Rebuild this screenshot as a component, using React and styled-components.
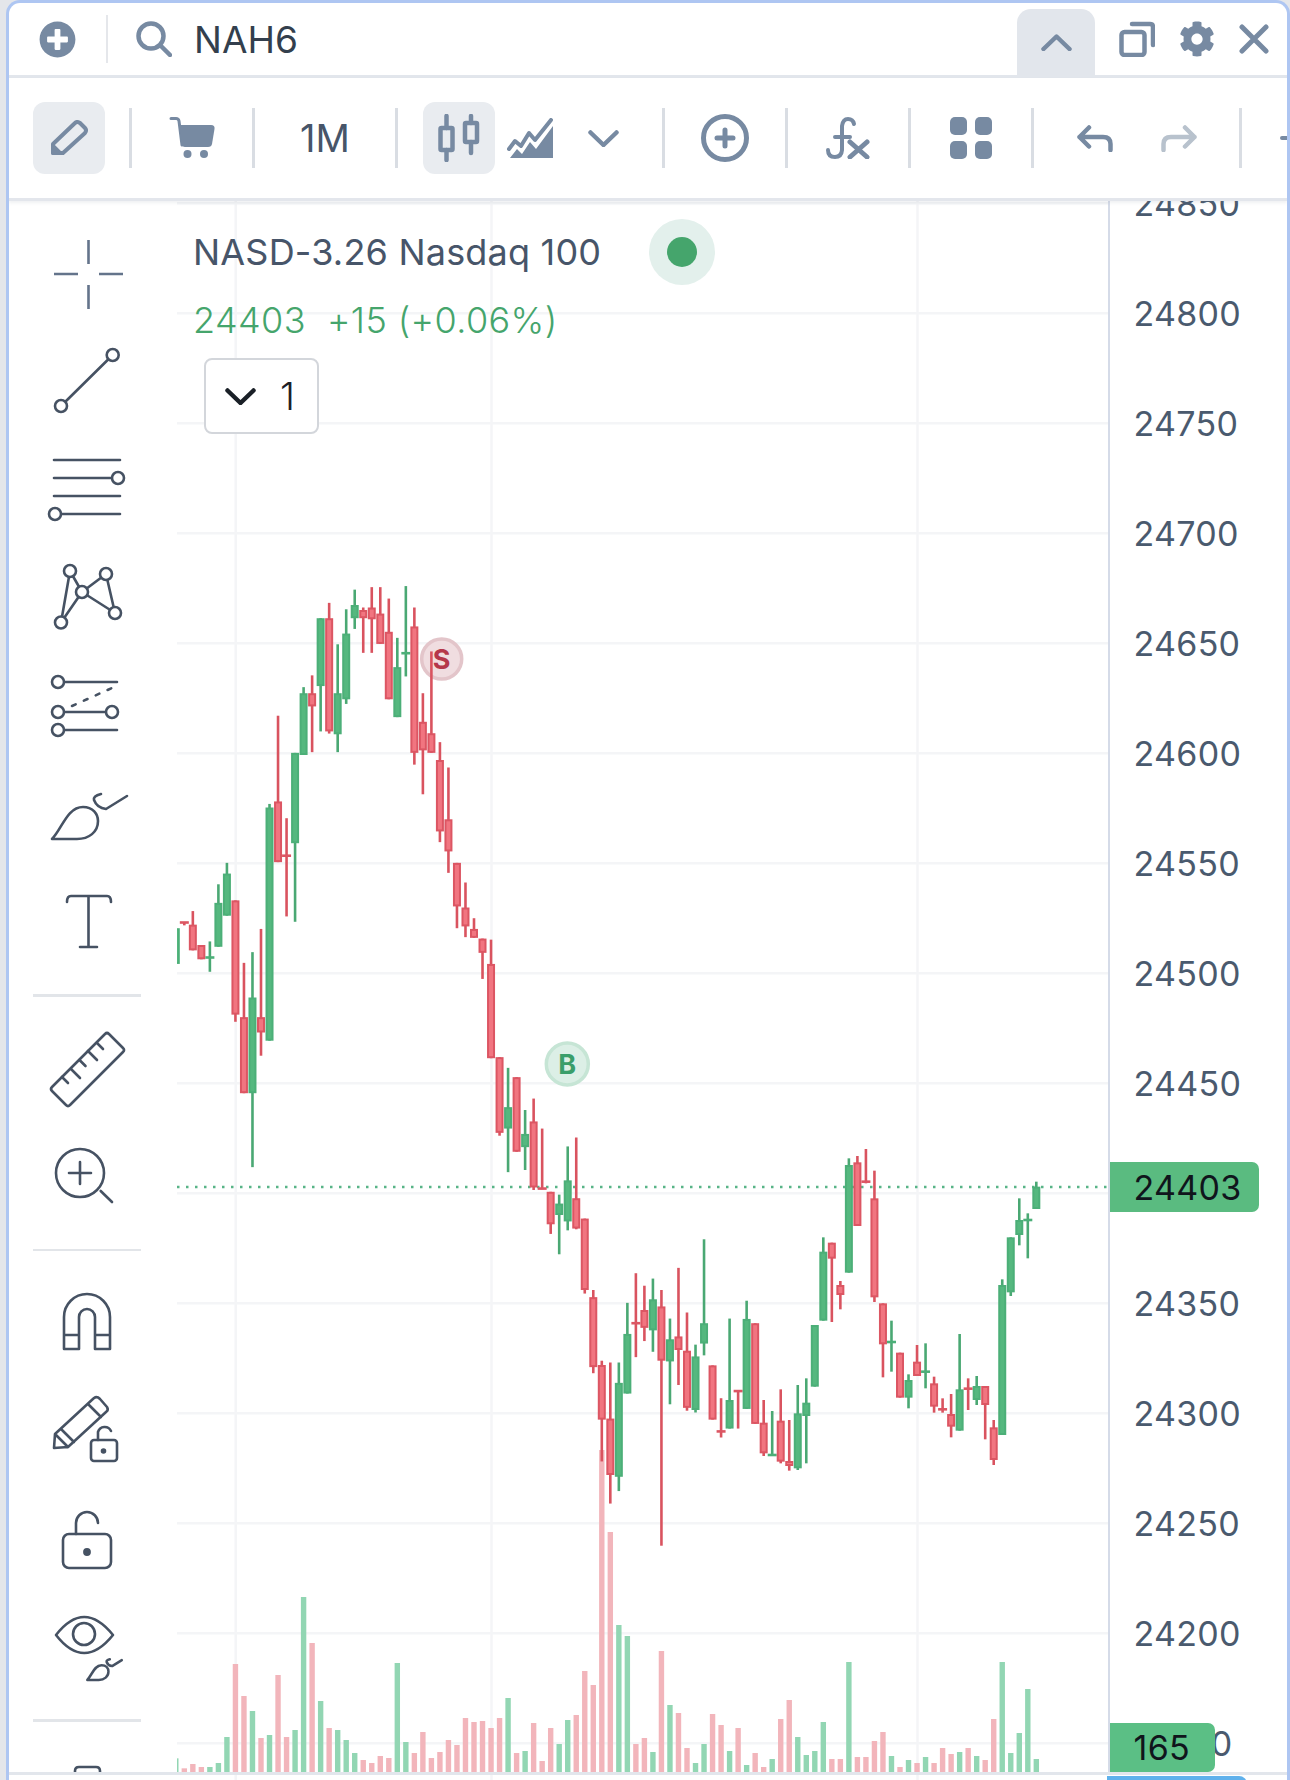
import styled, { createGlobalStyle } from "styled-components";
import { FaCog, FaPlusCircle } from "react-icons/fa";

const GlobalStyle = createGlobalStyle`
  html, body {
    margin: 0;
    padding: 0;
    background: #e4e6ea;
    font-family: Inter, "Liberation Sans", sans-serif;
  }
`;

const ICON = "#778aa2";
const INK = "#465263";

/* ---------- frame ---------- */

const Frame = styled.div`
  width: 1290px;
  height: 1780px;
  padding-left: 6px;
  box-sizing: border-box;
  overflow: hidden;
`;

const Panel = styled.div`
  width: 1284px;
  height: 1790px;
  box-sizing: border-box;
  background: #fff;
  border: 3px solid #aec6f2;
  border-bottom: 0;
  border-radius: 14px 14px 0 0;
  overflow: hidden;
`;

/* ---------- header ---------- */

const Header = styled.div`
  height: 72px;
  display: flex;
  align-items: center;
  border-bottom: 3px solid #e2e6ec;
`;

const HeaderPlus = styled(FaPlusCircle)`
  width: 37px;
  height: 37px;
  margin-left: 30px;
  color: ${ICON};
`;

const HeaderRule = styled.div`
  width: 2px;
  height: 48px;
  margin: 0 28px 0 30px;
  background: #e5e7eb;
`;

const Symbol = styled.span`
  margin-left: 22px;
  font-size: 37px;
  font-weight: 400;
  color: #333f4d;
`;

const HeaderRight = styled.div`
  margin-left: auto;
  height: 100%;
  display: flex;
  align-items: center;
`;

const CollapseTab = styled.div`
  width: 78px;
  height: 66px;
  align-self: flex-end;
  display: flex;
  align-items: center;
  justify-content: center;
  background: #e2e6ec;
  border-radius: 14px 14px 0 0;
  margin-right: 24px;
`;

const Gear = styled(FaCog)`
  width: 36px;
  height: 36px;
  margin: 0 24px;
  color: ${ICON};
`;

const Glyph = styled.svg`
  display: block;
  flex: none;
  fill: none;
  stroke: ${(p) => p.$tone || ICON};
  stroke-linecap: round;
  stroke-linejoin: round;
  margin-left: ${(p) => p.$ml || 0}px;
  margin-right: ${(p) => p.$mr || 0}px;
`;

/* ---------- toolbar ---------- */

const Toolbar = styled.div`
  height: 120px;
  display: flex;
  align-items: center;
  border-bottom: 3px solid #e3e6ec;
  box-shadow: 0 2px 3px rgba(120, 130, 150, 0.12);
  position: relative;
  z-index: 2;
  background: #fff;
`;

const Cell = styled.div`
  width: ${(p) => p.$w || 120}px;
  flex: none;
  display: flex;
  align-items: center;
  justify-content: ${(p) => (p.$start ? "flex-start" : "center")};
  padding-left: ${(p) => p.$pl || 0}px;
  gap: ${(p) => p.$gap || 0}px;
  box-sizing: border-box;
`;

const ToolRule = styled.div`
  width: 3px;
  height: 60px;
  flex: none;
  background: #d9dde3;
`;

const ActiveButton = styled.div`
  width: 72px;
  height: 72px;
  flex: none;
  display: flex;
  align-items: center;
  justify-content: center;
  border-radius: 12px;
  background: #e9ecf0;
`;

const Interval = styled.span`
  font-size: 38px;
  color: #475569;
`;

/* ---------- body ---------- */

const Body = styled.div`
  height: 1571px;
  display: flex;
`;

const Sidebar = styled.div`
  width: 168px;
  flex: none;
  box-sizing: border-box;
  padding: 19px 12px 0 0;
  overflow: hidden;
`;

const ToolButton = styled.div`
  height: 108px;
  display: flex;
  align-items: center;
  justify-content: center;
`;

const ToolSvg = styled.svg`
  display: block;
  width: 80px;
  height: 80px;
  overflow: visible;
  fill: none;
  stroke: ${INK};
  stroke-width: 2.6;
  stroke-linecap: round;
  stroke-linejoin: round;
`;

const SidebarRule = styled.div`
  height: 2.5px;
  margin: 18px 24px;
  background: #e2e5e9;
`;

const ChartArea = styled.div`
  width: 930.5px;
  flex: none;
  position: relative;
  overflow: hidden;
`;

const ChartSvg = styled.svg`
  display: block;
  width: 931px;
  height: 1571px;
`;

const BadgeLetter = styled.text`
  font-family: Inter, "Liberation Sans", sans-serif;
  font-weight: 700;
  font-size: 27px;
  text-anchor: middle;
  fill: ${(p) => p.$color};
`;

const Legend = styled.div`
  position: absolute;
  left: 16px;
  top: 18px;
`;

const LegendTitleRow = styled.div`
  height: 66px;
  display: flex;
  align-items: center;
`;

const LegendTitle = styled.span`
  font-size: 36px;
  letter-spacing: 0.2px;
  color: #475569;
  white-space: pre;
`;

const StatusDot = styled.div`
  width: 66px;
  height: 66px;
  margin-left: 48px;
  border-radius: 50%;
  background: #e3f0ec;
  display: flex;
  align-items: center;
  justify-content: center;

  &::after {
    content: "";
    width: 30px;
    height: 30px;
    border-radius: 50%;
    background: #45a56c;
  }
`;

const LegendPrice = styled.div`
  height: 70px;
  display: flex;
  align-items: center;
  font-size: 36px;
  font-weight: 300;
  letter-spacing: 0.4px;
  color: #45a56c;
  white-space: pre;
`;

const CollapseButton = styled.div`
  width: 115px;
  height: 76px;
  margin: 3px 0 0 11px;
  box-sizing: border-box;
  background: #fff;
  border: 2.5px solid #d3d6db;
  border-radius: 8px;
  display: flex;
  align-items: center;
  padding-left: 19px;
  gap: 24px;
  font-size: 38px;
  font-weight: 300;
  color: #1a2027;
`;

/* ---------- price axis ---------- */

const Axis = styled.div`
  flex: 1;
  position: relative;
  overflow: hidden;
  border-left: 2.5px solid #d5dbe8;
`;

const AxisLabels = styled.div`
  margin-top: -53px;
`;

const AxisLabel = styled.div`
  height: 110px;
  display: flex;
  align-items: center;
  padding-left: 24px;
  font-size: 34px;
  letter-spacing: 0.3px;
  color: #4a5a6e;
`;

const AxisTag = styled.div`
  position: absolute;
  left: -2.5px;
  top: ${(p) => p.$top}px;
  width: ${(p) => p.$w}px;
  height: ${(p) => p.$h}px;
  display: flex;
  align-items: center;
  box-sizing: border-box;
  padding-left: ${(p) => p.$pl}px;
  background: ${(p) => p.$bg};
  border-radius: 0 7px 7px 0;
  font-size: 34px;
  letter-spacing: 0.3px;
  color: #10151c;
`;

const Footer = styled.div`
  display: flex;
  border-top: 3px solid #e2e6ec;
  padding-left: 168px;
`;

const FooterGrid = styled.svg`
  display: block;
  width: 930px;
  height: 8px;
  flex: none;
`;

const OrderBar = styled.div`
  width: 140px;
  height: 8px;
  margin-top: 1px;
  background: #5fb1ec;
  border-radius: 0 10px 0 0;
`;

/* ---------- chart data (page pixel coordinates after conversion) ---------- */

const c = (dir, top, bottom, wickTop = top, wickBottom = bottom) => [dir, top, bottom, wickTop, wickBottom];

const LEFT_PART = [
  c("u", 1003, 1103),
  c("d", 987, 987, 987, 995),
  c("d", 993, 1065, 955, 1065),
  c("d", 1050, 1090),
  c("u", 1085, 1085, 1040, 1125),
  c("u", 932, 1055, 880, 1055),
  c("u", 850, 968, 820, 968),
  c("d", 925, 1245, 925, 1265),
  c("d", 1252, 1465, 1100, 1465),
  c("u", 1197, 1465, 1070, 1672),
  c("d", 1252, 1295, 1005, 1360),
  c("u", 665, 1318, 655, 1318),
  c("d", 648, 818, 408, 818),
  c("d", 800, 800, 695, 970),
  c("u", 512, 765, 512, 985),
  c("u", 345, 518, 328, 518),
  c("d", 345, 382, 295, 510),
  c("u", 135, 325, 135, 452),
  c("d", 135, 452, 92, 458),
  c("u", 345, 460, 208, 510),
  c("u", 178, 362, 110, 375),
  c("u", 98, 135, 55, 165),
  c("d", 112, 135, 105, 232),
  c("d", 105, 138, 48, 232),
  c("d", 122, 207, 48, 207),
  c("d", 173, 362, 80, 362),
  c("u", 272, 412, 190, 412),
  c("u", 233, 233, 45, 298),
  c("d", 158, 512, 105, 545),
  c("d", 425, 505, 345, 628),
  c("d", 457, 512, 228, 512),
  c("d", 532, 732, 482, 762),
  c("d", 698, 788, 553, 848),
  c("d", 820, 942, 820, 1003),
  c("d", 945, 998, 875, 1028),
  c("d", 1005, 1030, 975, 1030),
  c("d", 1032, 1072, 1032, 1145),
  c("d", 1103, 1367, 1035, 1367),
];

const MIDDLE_PART = [
  c("d", 160, 372, 160, 380),
  c("u", 300, 360, 190, 482),
  c("d", 216, 425),
  c("u", 375, 412, 308, 476),
  c("d", 340, 525, 276, 532),
  c("d", 528, 528, 360, 530),
  c("d", 537, 628, 537, 655),
  c("u", 570, 602, 545, 712),
  c("u", 505, 620, 410, 645),
  c("d", 555, 640, 385, 642),
  c("d", 612, 812, 612, 822),
  c("d", 832, 1028, 812, 1045),
  c("d", 1022, 1175, 1010, 1292),
  c("d", 1172, 1330, 1015, 1410),
  c("u", 1072, 1335, 1015, 1375),
  c("u", 935, 1102, 848, 1102),
  c("d", 905, 905, 765, 1000),
  c("d", 868, 918, 800, 955),
  c("u", 838, 925, 780, 985),
  c("d", 858, 1010, 812, 1528),
  c("u", 950, 1012, 892, 1132),
  c("d", 942, 980, 750, 1078),
  c("d", 982, 1142, 875, 1150),
  c("u", 998, 1148, 965, 1155),
  c("u", 905, 962, 670, 995),
  c("d", 1023, 1175),
  c("d", 1208, 1208, 1115, 1225),
  c("u", 1120, 1200, 892, 1200),
  c("d", 1095, 1095, 1095, 1200),
  c("u", 893, 1145, 842, 1145),
  c("d", 905, 1187),
];

const RIGHT_PART = [
  c("d", 878, 970, 810, 978),
  c("u", 975, 975, 843, 975),
  c("d", 872, 995, 778, 1000),
  c("d", 993, 1008, 870, 1022),
  c("u", 850, 1015, 765, 1020),
  c("u", 818, 858, 745, 1000),
  c("u", 585, 770),
  c("u", 365, 572, 322, 572),
  c("d", 338, 386, 338, 576),
  c("d", 465, 495, 453, 538),
  c("u", 105, 428, 85, 428),
  c("d", 97, 288, 78, 288),
  c("d", 155, 155, 57, 160),
  c("d", 205, 502, 122, 516),
  c("d", 520, 643, 520, 742),
  c("u", 636, 636, 572, 725),
  c("d", 668, 803),
  c("u", 750, 803, 733, 835),
  c("d", 695, 738, 645, 738),
  c("u", 725, 725, 640, 775),
  c("d", 760, 830, 740, 848),
  c("d", 838, 838, 805, 848),
  c("d", 852, 890, 792, 922),
  c("u", 778, 902, 612, 902),
  c("d", 776, 776, 745, 840),
  c("u", 768, 810, 738, 825),
  c("d", 768, 825, 768, 928),
  c("d", 892, 990, 870, 1005),
  c("u", 465, 915, 448, 915),
  c("u", 322, 487, 322, 498),
  c("u", 270, 315, 205, 346),
  c("u", 270, 270, 250, 385),
  c("u", 170, 237, 155, 237),
];

const toPage = (rows, origin, scale) =>
  rows.map(([dir, ...ys]) => [dir, ...ys.map((y) => origin + y / scale)]);

const CANDLES = [
  ...toPage(LEFT_PART, 570, 2.8),
  ...toPage(MIDDLE_PART, 1000, 2.8),
  ...toPage(RIGHT_PART, 1130, 3),
];

const VOLUME_TOPS =
  "g655 p685 p672 p681 g681 g669 g591 p372 p468 g513 p594 g585 p405 p591 g570 g171 p309 g483 p564 g570 g600 g639 p660 p669 p648 p654 g369 g606 p639 p576 p654 p636 p600 p615 p534 p546 p543 p564 p534 g474 p639 g633 p549 p663 p564 g612 g540 p525 p393 p435 p-270 p-24 g255 g288 p612 p594 g636 p333 g495 p519 p624 g669 g612 p522 p555 g633 p564 g675 p639 p681 g657 p537 p480 g591 g645 g633 g546 p657 p657 g366 p651 p651 p603 p576 g648 p681 g660 p669 g651 p669 p624 p642 g636 p624 g648 p660 p537 g366 g639 g579 g447 g657"
    .split(" ")
    .map((t) => [t[0], 1540 + Number(t.slice(1)) / 3]);

const X_START = 175.8;
const X_STEP = 8.52;
const GRID_Y = Array.from({ length: 15 }, (_, i) => 203.3 + i * 110);
const GRID_X = [235.7, 491.5, 917.5];
const PRICES = Array.from({ length: 15 }, (_, i) => 24850 - i * 50);

const RED = { edge: "#dc5663", fill: "#f17580", wick: "#d9535f" };
const GREEN = { edge: "#4caf78", fill: "#55b87f", wick: "#4aa873" };

const Candle = ({ x, data }) => {
  const [dir, top, bottom, wickTop, wickBottom] = data;
  const tone = dir === "u" ? GREEN : RED;
  return (
    <g>
      <line x1={x} x2={x} y1={wickTop} y2={wickBottom} stroke={tone.wick} strokeWidth="2.6" />
      {bottom - top < 1 ? (
        <line x1={x - 4.5} x2={x + 4.5} y1={top} y2={top} stroke={tone.edge} strokeWidth="2.6" />
      ) : (
        <rect
          x={x - 3}
          y={top + 1}
          width="6"
          height={Math.max(bottom - top - 2, 1)}
          fill={tone.fill}
          stroke={tone.edge}
          strokeWidth="2"
        />
      )}
    </g>
  );
};

const PriceChart = () => (
  <ChartSvg viewBox="177 201 931 1571">
    {GRID_Y.map((y) => (
      <line key={y} x1="177" x2="1108" y1={y} y2={y} stroke="#f4f5f7" strokeWidth="2.5" />
    ))}
    {GRID_X.map((x) => (
      <line key={x} x1={x} x2={x} y1="201" y2="1772" stroke="#f4f5f7" strokeWidth="2.5" />
    ))}
    {VOLUME_TOPS.map(([tone, top], i) => (
      <rect
        key={i}
        x={X_START + i * X_STEP - 2.7}
        y={top}
        width="5.4"
        height={1772 - top}
        fill={tone === "g" ? "#92d6b3" : "#f2b5bb"}
      />
    ))}
    <line
      x1="177"
      x2="1108"
      y1="1187"
      y2="1187"
      stroke="#58b487"
      strokeWidth="2.5"
      strokeDasharray="2.5 6.5"
    />
    <circle cx="441.7" cy="659" r="20" fill="#f0dde0" stroke="#e3c5ca" strokeWidth="3.5" />
    <BadgeLetter x="441.7" y="668.5" $color="#b5374a">
      S
    </BadgeLetter>
    <circle cx="567.3" cy="1064" r="21" fill="#dcefe6" stroke="#c6e5d5" strokeWidth="3.5" />
    <BadgeLetter x="567.3" y="1073.5" $color="#3a9e6a">
      B
    </BadgeLetter>
    {CANDLES.map((data, i) => (
      <Candle key={i} x={X_START + i * X_STEP} data={data} />
    ))}
  </ChartSvg>
);

/* ---------- sidebar drawings ---------- */

const Handle = ({ x, y }) => <circle cx={x} cy={y} r="6" fill="#fff" />;

const BRUSH_TIP = "M5 65 C15 55 20 33 36 33 C46 33 51 40 51 47 C51 58 42 65 30 65 Z";
const BRUSH_STEM = "M54 20 Q46 22 47 26 Q50 34 59 35 L80 22";

const TOOLS = [
  <ToolSvg key="cross" viewBox="0 0 80 80" style={{ stroke: "#64748b" }}>
    <path d="M7 40H31M52 40H76M41.5 6V30M41.5 51V75" strokeLinecap="butt" />
  </ToolSvg>,
  <ToolSvg key="line" viewBox="0 0 80 80">
    <path d="M14 64L65.7 13" />
    <Handle x={14} y={64} />
    <Handle x={65.7} y={13} />
  </ToolSvg>,
  <ToolSvg key="fib" viewBox="0 0 80 80">
    <path d="M7 10H73M7 28H65M7 46H73M14 64H73" />
    <Handle x={71} y={28} />
    <Handle x={8} y={64} />
  </ToolSvg>,
  <ToolSvg key="pattern" viewBox="0 0 80 80">
    <path d="M23 13L14 64.5L35 34L23 13M35 34L59 16L68 55L35 34" />
    <Handle x={23} y={13} />
    <Handle x={59} y={16} />
    <Handle x={35} y={34} />
    <Handle x={68} y={55} />
    <Handle x={14} y={64.5} />
  </ToolSvg>,
  <ToolSvg key="channel" viewBox="0 0 80 80">
    <path d="M11 16H70M11 46H65M11 64H70" />
    <path d="M25 40L65 22" strokeDasharray="4 9" />
    <Handle x={11} y={16} />
    <Handle x={11} y={46} />
    <Handle x={65} y={46} />
    <Handle x={11} y={64} />
  </ToolSvg>,
  <ToolSvg key="brush" viewBox="0 0 80 80">
    <path d={BRUSH_TIP} />
    <path d={BRUSH_STEM} />
  </ToolSvg>,
  <ToolSvg key="text" viewBox="0 0 80 80">
    <path d="M20 20Q20 14 24 14H60Q64 14 64 20M41.5 14V65M33 65H50" />
  </ToolSvg>,
  "rule",
  <ToolSvg key="ruler" viewBox="0 0 80 80">
    <path d="M5 58L58 5Q60 3 62 5L76 19Q78 21 76 23L23 76Q21 78 19 76L5 62Q3 60 5 58Z" />
    <path d="M15 48L21 54M24 40L33 49M32.5 31L38.5 37M41 22L50 31M50 14L56 20" />
  </ToolSvg>,
  <ToolSvg key="zoom" viewBox="0 0 80 80">
    <circle cx="33" cy="36" r="24" />
    <path d="M53.7 54L65 65M33 25V47M22 36H44" />
  </ToolSvg>,
  "rule",
  <ToolSvg key="magnet" viewBox="0 0 80 80">
    <path d="M17 66V34A23 23 0 0 1 63 34V66H48V34A8 8 0 0 0 32 34V66ZM17 52H32M48 52H63" />
  </ToolSvg>,
  <ToolSvg key="pencil-lock" viewBox="0 0 80 80">
    <path d="M7 57L8 43L47 7Q50 5 53 8L60 16Q62 19 59 21L21 56ZM8 43L21 56M14 38L27 51M41 13L54 26" />
    <rect x="44" y="49" width="26" height="21" rx="3" fill="#fff" />
    <path d="M51 49V41A7 7 0 0 1 64 40" />
    <circle cx="56.5" cy="60" r="1.5" fill={INK} />
  </ToolSvg>,
  <ToolSvg key="lock" viewBox="0 0 80 80">
    <rect x="16" y="35" width="48" height="34" rx="6" />
    <path d="M29 35V24A11 11 0 0 1 51 24" />
    <circle cx="40" cy="53" r="2.6" fill={INK} />
  </ToolSvg>,
  <ToolSvg key="eye" viewBox="0 0 80 80">
    <path d="M9 28Q37 -8 66 28Q37 64 9 28Z" />
    <circle cx="37" cy="27" r="11" />
    <g transform="translate(38 43) scale(0.46)" strokeWidth="5.4">
      <path d={BRUSH_TIP} />
      <path d={BRUSH_STEM} />
    </g>
  </ToolSvg>,
  "rule",
  <ToolSvg key="toolbox" viewBox="0 0 80 80">
    <path d="M28 23V17Q28 13 32 13H49Q53 13 53 17V23M13 23H67" />
  </ToolSvg>,
];

/* ---------- header and toolbar drawings ---------- */

const SearchIcon = () => (
  <Glyph viewBox="0 0 36 36" width="36" height="36" strokeWidth="4.5">
    <circle cx="15" cy="15" r="12.5" />
    <path d="M25 25L34 34" />
  </Glyph>
);

const RestoreIcon = () => (
  <Glyph viewBox="0 0 36 36" width="36" height="36" strokeWidth="4.5">
    <rect x="2.5" y="11" width="23" height="23" rx="3" />
    <path d="M13 3H31Q34 3 34 6V24" />
  </Glyph>
);

const CloseIcon = () => (
  <Glyph viewBox="0 0 30 30" width="30" height="30" strokeWidth="5" $mr={18}>
    <path d="M3 3L27 27M27 3L3 27" />
  </Glyph>
);

const PencilIcon = () => (
  <Glyph viewBox="0 0 38 36" width="38" height="36" strokeWidth="4">
    <path d="M3 33V24L25 3Q27 1 30 3L35 8Q37 10 35 13L13 33Z" />
    <path d="M3 33V26L10 33Z" fill={ICON} />
  </Glyph>
);

const CartIcon = () => (
  <Glyph viewBox="0 0 46 44" width="46" height="44" strokeWidth="3">
    <path d="M2 2.5H7Q9.5 2.5 10 5L13 29" />
    <path d="M10.5 9H42Q46 9 45.5 13L43 28Q42.5 31 39 31H16Q13 31 12.5 28Z" fill={ICON} stroke="none" />
    <circle cx="18.5" cy="38" r="4" fill={ICON} stroke="none" />
    <circle cx="35" cy="38" r="4" fill={ICON} stroke="none" />
  </Glyph>
);

const CandlesIcon = () => (
  <Glyph viewBox="0 0 42 48" width="42" height="48" strokeWidth="4.5">
    <path d="M8.5 2V14M8.5 36V46M33 2V9M33 28V39" />
    <rect x="2.5" y="14" width="12" height="22" rx="1" />
    <rect x="27" y="9" width="12" height="19" rx="1" />
  </Glyph>
);

const AreaIcon = () => (
  <Glyph viewBox="0 0 46 40" width="46" height="40" strokeWidth="4" $ml={12}>
    <path d="M2 31L8 23L14 28L22 15L28 22L44 2" />
    <path d="M3 40L10 31L15 36L23 24L29 31L46 8V40Z" fill={ICON} stroke="none" />
  </Glyph>
);

const Chevron = ({ up, tone, ml, sw = 4.5 }) => (
  <Glyph viewBox="0 0 31 17" width="31" height="17" strokeWidth={sw} $tone={tone} $ml={ml}>
    <path d={up ? "M2.5 15L15.5 2.5L28.5 15" : "M2.5 2.5L15.5 15L28.5 2.5"} />
  </Glyph>
);

const AddIcon = () => (
  <Glyph viewBox="0 0 48 48" width="48" height="48" strokeWidth="5">
    <circle cx="24" cy="24" r="21.5" />
    <path d="M24 16V32M16 24H32" />
  </Glyph>
);

const FormulaIcon = () => (
  <Glyph viewBox="0 0 44 42" width="44" height="42" strokeWidth="4">
    <path d="M28 7Q27 2 22 2Q17 2 16 9V33Q15.5 40 9 40Q2 40 2 33M9 20H24" />
    <path d="M24 25L41 40M41 25L24 40" strokeWidth="5" />
  </Glyph>
);

const LayoutIcon = () => (
  <Glyph viewBox="0 0 42 42" width="42" height="42" stroke="none" style={{ fill: ICON, stroke: "none" }}>
    <rect x="0" y="0" width="17" height="18" rx="5" />
    <rect x="25" y="0" width="17" height="18" rx="5" />
    <rect x="0" y="24" width="17" height="18" rx="5" />
    <rect x="25" y="24" width="17" height="18" rx="5" />
  </Glyph>
);

const ArrowIcon = ({ mirrored, tone }) => (
  <Glyph
    viewBox="0 0 36 27"
    width="36"
    height="27"
    strokeWidth="4.5"
    $tone={tone}
    style={mirrored ? { transform: "scaleX(-1)" } : undefined}>
    <path d="M12 2.5L2.5 12L12 21.5M2.5 12H26Q33.5 12 33.5 19V25" />
  </Glyph>
);

const App = () => (
  <Frame>
    <GlobalStyle />
    <Panel>
      <Header>
        <HeaderPlus />
        <HeaderRule />
        <SearchIcon />
        <Symbol>NAH6</Symbol>
        <HeaderRight>
          <CollapseTab>
            <Chevron up />
          </CollapseTab>
          <RestoreIcon />
          <Gear />
          <CloseIcon />
        </HeaderRight>
      </Header>

      <Toolbar>
        <Cell $pl={24} $start>
          <ActiveButton>
            <PencilIcon />
          </ActiveButton>
        </Cell>
        <ToolRule />
        <Cell>
          <CartIcon />
        </Cell>
        <ToolRule />
        <Cell $w={140}>
          <Interval>1M</Interval>
        </Cell>
        <ToolRule />
        <Cell $w={264} $pl={25} $start>
          <ActiveButton>
            <CandlesIcon />
          </ActiveButton>
          <AreaIcon />
          <Chevron ml={35} />
        </Cell>
        <ToolRule />
        <Cell>
          <AddIcon />
        </Cell>
        <ToolRule />
        <Cell>
          <FormulaIcon />
        </Cell>
        <ToolRule />
        <Cell>
          <LayoutIcon />
        </Cell>
        <ToolRule />
        <Cell $w={205} $gap={48}>
          <ArrowIcon />
          <ArrowIcon mirrored tone="#b8c2cd" />
        </Cell>
        <ToolRule />
        <Cell $w={45} $pl={38} $start>
          <Glyph viewBox="0 0 20 20" width="20" height="20" strokeWidth="4">
            <path d="M2 10H18M10 2V18" />
          </Glyph>
        </Cell>
      </Toolbar>

      <Body>
        <Sidebar>
          {TOOLS.map((tool, i) =>
            tool === "rule" ? <SidebarRule key={i} /> : <ToolButton key={i}>{tool}</ToolButton>
          )}
        </Sidebar>

        <ChartArea>
          <PriceChart />
          <Legend>
            <LegendTitleRow>
              <LegendTitle>NASD-3.26 Nasdaq 100</LegendTitle>
              <StatusDot />
            </LegendTitleRow>
            <LegendPrice>24403  +15 (+0.06%)</LegendPrice>
            <CollapseButton>
              <Chevron tone="#1a2027" />1
            </CollapseButton>
          </Legend>
        </ChartArea>

        <Axis>
          <AxisLabels>
            {PRICES.map((price) => (
              <AxisLabel key={price}>{price}</AxisLabel>
            ))}
          </AxisLabels>
          <AxisTag $top={961} $w={151.5} $h={50} $pl={26.5} $bg="#5abb80">
            24403
          </AxisTag>
          <AxisTag $top={1522} $w={107.5} $h={49} $pl={26.5} $bg="#5bbf85">
            165
          </AxisTag>
        </Axis>
      </Body>

      <Footer>
        <FooterGrid viewBox="177 0 930 8">
          {GRID_X.map((x) => (
            <line key={x} x1={x} x2={x} y1="0" y2="8" stroke="#f4f5f7" strokeWidth="2.5" />
          ))}
        </FooterGrid>
        <OrderBar />
      </Footer>
    </Panel>
  </Frame>
);

export default App;
